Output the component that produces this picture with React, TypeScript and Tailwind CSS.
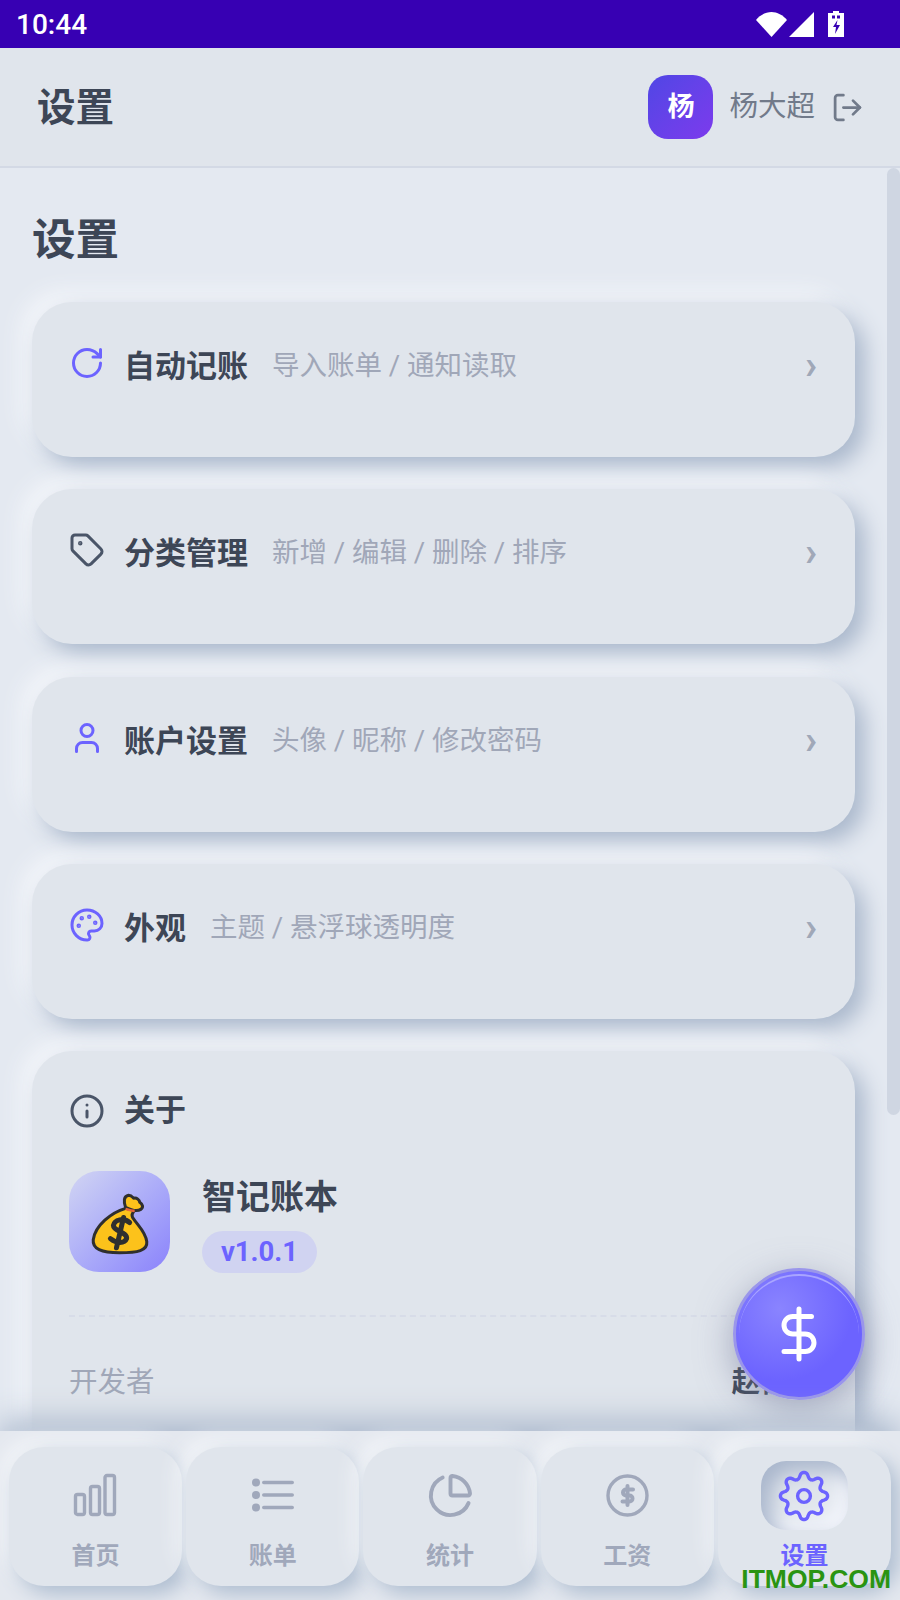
import { RotateCw, Tag, User, Palette, Info, LogOut, ChartPie, DollarSign } from 'lucide-react';
import type { ReactNode } from 'react';

const rows = [
  { icon: <RotateCw className="w-9 h-9 text-[#6c63ff]" strokeWidth={2} />, title: '自动记账', desc: '导入账单 / 通知读取' },
  { icon: <Tag className="w-9 h-9 text-[#4a5568]" strokeWidth={2} />, title: '分类管理', desc: '新增 / 编辑 / 删除 / 排序' },
  { icon: <User className="w-9 h-9 text-[#6c63ff]" strokeWidth={2} />, title: '账户设置', desc: '头像 / 昵称 / 修改密码' },
  { icon: <Palette className="w-9 h-9 text-[#6c63ff]" strokeWidth={2} />, title: '外观', desc: '主题 / 悬浮球透明度' },
];

// rounded 8-tooth outline, as a polar wave
const gearPath = Array.from({ length: 160 }, (_, i) => {
  const a = (i / 160) * Math.PI * 2;
  const wave = Math.cos(a * 8);
  const r = 20.6 + 3 * Math.sign(wave) * Math.pow(Math.abs(wave), 0.7);
  const x = 26 + r * Math.sin(a);
  const y = 26 - r * Math.cos(a);
  return `${i === 0 ? 'M' : 'L'}${x.toFixed(2)} ${y.toFixed(2)}`;
}).join(' ') + 'Z';

const GearIcon = () => (
  <svg viewBox="0 0 52 52" className="w-[52px] h-[52px]" fill="none" stroke="currentColor" strokeWidth={3.4} strokeLinejoin="round">
    <path d={gearPath} />
    <circle cx="26" cy="26" r="6.4" />
  </svg>
);

const BarsIcon = () => (
  <svg viewBox="0 0 45 45" className="w-[45px] h-[45px]" fill="none" stroke="currentColor" strokeWidth={3.4}>
    <rect x="2.5" y="21.5" width="9" height="20" rx="2" />
    <rect x="17.5" y="13.5" width="9" height="28" rx="2" />
    <rect x="32" y="2.5" width="9.5" height="39" rx="2" />
  </svg>
);

const ListIcon = () => (
  <svg viewBox="0 0 45 45" className="w-[45px] h-[45px]" fill="currentColor">
    <circle cx="6" cy="9.500" r="4" />
    <circle cx="6" cy="22" r="4" />
    <circle cx="6" cy="34.500" r="4" />
    <rect x="12" y="7.700" width="32" height="3.600" rx="1.800" />
    <rect x="12" y="20.200" width="32" height="3.600" rx="1.800" />
    <rect x="12" y="32.700" width="32" height="3.600" rx="1.800" />
  </svg>
);

const CoinIcon = () => (
  <svg viewBox="0 0 45 45" className="w-[45px] h-[45px]" fill="none" stroke="currentColor" strokeLinecap="round">
    <circle cx="22.500" cy="22.500" r="19.500" strokeWidth={3.4} />
    <path d="M28 16.500h-7a3 3 0 0 0 0 6h3.500a3 3 0 0 1 0 6h-7" strokeWidth={4} />
    <path d="M22.500 13v19" strokeWidth={4} />
  </svg>
);

const MoneyBag = () => (
  <svg viewBox="0 0 100 100" className="w-full h-full">
    <path d="M56 37C42 41 26 54 24 68C23 77 32 81 50 81C68 81 78 79 77 70C76 60 68 54 63 46C62 44 63 41 65 39Z" fill="#fcc21b" stroke="#2f2f2f" strokeWidth="3" strokeLinejoin="round" />
    <path d="M56 36C54 30 54 25 59 24C62 24 63 26 64 27C67 26 70 29 70 31C73 33 74 36 71 38C68 40 62 39 56 36Z" fill="#fcc21b" stroke="#2f2f2f" strokeWidth="3" strokeLinejoin="round" />
    <path d="M56 37.500C59 38.500 62 39.500 65 39.500" stroke="#e8683a" strokeWidth="2.600" fill="none" />
    <path d="M60 51C54 46 45 48 44 54C44 60 58 60 57 67C55 72 47 72 41 67M54 46L47 76" stroke="#2f2f2f" strokeWidth="5" fill="none" strokeLinecap="round" />
  </svg>
);

const SoftCard = ({ className, children }: { className: string; children: ReactNode }) => (
  <div className={`bg-[#e0e5ec] rounded-[40px] shadow-[10px_10px_22px_#aab8cc,-10px_-10px_22px_#f4f6fa] ${className}`}>
    {children}
  </div>
);

const NavItem = ({ icon, label, active }: { icon: ReactNode; label: string; active?: boolean }) => (
  <div className="flex-1 h-[139px] rounded-[35px] bg-[#e0e5ec] shadow-[8px_8px_20px_#aebdd0,-8px_-8px_20px_#f4f6f9] flex flex-col items-center">
    <div
      className={`mt-[14px] w-[87px] h-[69px] rounded-[25px] flex items-center justify-center ${
        active
          ? 'text-[#6c63ff] shadow-[inset_10px_10px_20px_#a9b6cc,inset_-10px_-10px_20px_#f4f6fc]'
          : 'text-[#a0a8bb]'
      }`}
    >
      {icon}
    </div>
    <span className={`mt-[8px] text-[24px] leading-[36px] font-bold ${active ? 'text-[#6c63ff]' : 'text-[#a0a8bb]'}`}>
      {label}
    </span>
  </div>
);

export default function App() {
  return (
    <div className="relative w-[900px] h-[1600px] overflow-hidden flex flex-col bg-[#e4e9f1] font-['Roboto','Noto_Sans_CJK_SC',sans-serif]">
      {/* Status bar */}
      <div className="h-[48px] shrink-0 bg-[#3700b3] flex items-center justify-between pl-[16px] pr-[56px] text-white">
        <span className="text-[28px] leading-none font-medium mt-[2px]">10:44</span>
        <div className="flex items-center">
          <svg viewBox="0 0 31 25" className="w-[31px] h-[25px]" fill="white">
            <path d="M0 8C4 3 10 0 15.500 0S27 3 31 8L15.500 25z" />
          </svg>
          <svg viewBox="0 0 25 25" className="w-[25px] h-[25px] ml-[2px]" fill="white">
            <path d="M25 0v25H0z" />
          </svg>
          <svg viewBox="0 0 16 26" className="w-[16px] h-[26px] ml-[14px]">
            <path d="M5 0h6v2h5v24H0V2h5z" fill="white" />
            <path d="M9.500 9 5 16h3l-1 7 5-9H8.500z" fill="#3700b3" />
            <path d="M4 4.500h3v3H4zM9 4.500h3v3H9z" fill="#3700b3" />
          </svg>
        </div>
      </div>

      {/* Top bar */}
      <header className="h-[120px] shrink-0 bg-[#e0e5ec] border-b-2 border-[#d3d9e5] flex items-center justify-between pl-[37px] pr-[36px]">
        <h1 className="text-[38.500px] font-bold text-[#3d4656] mt-[2px]">设置</h1>
        <div className="flex items-center">
          <div className="w-[65px] h-[64px] rounded-[20px] bg-gradient-to-br from-[#4f46e5] to-[#7c3aed] flex items-center justify-center text-white text-[27px] font-bold">
            杨
          </div>
          <span className="ml-[16px] text-[28.500px] text-[#717a8a]">杨大超</span>
          <LogOut className="ml-[16px] w-[33px] h-[33px] text-[#717a8a]" strokeWidth={2} />
        </div>
      </header>

      {/* Scroll area */}
      <main className="relative flex-1 overflow-hidden pl-[32px] pr-[45px] pt-[41px]">
        <h2 className="text-[43.500px] leading-[62px] font-bold text-[#3d4656] mt-[1px]">设置</h2>

        <div className="mt-[30px] flex flex-col gap-[32.250px]">
          {rows.map((row) => (
            <SoftCard key={row.title} className="h-[155px] flex items-start pl-[37px] pr-[36px] pt-[44px]">
              <div className="w-[36px] h-[36px] shrink-0 mt-[-1px]">{row.icon}</div>
              <span className="ml-[19px] text-[31px] leading-[44px] font-bold text-[#3d4656] mt-[-1px]">{row.title}</span>
              <span className="ml-[24px] text-[27.500px] leading-[40px] text-[#a0a7b8]">{row.desc}</span>
              <span className="ml-auto mr-[2px] text-[40px] leading-[40px] font-bold text-[#a0a8b8]">›</span>
            </SoftCard>
          ))}

          <SoftCard className="h-[420px] pl-[37px] pr-[38px] pt-[42px]">
            <div className="flex items-center h-[36px]">
              <Info className="w-9 h-9 text-[#4a5568]" strokeWidth={2} />
              <span className="ml-[19px] text-[31px] font-bold text-[#3d4656]">关于</span>
            </div>
            <div className="mt-[42px] flex items-start">
              <div className="w-[101px] h-[101px] rounded-[30px] bg-gradient-to-br from-[#d2d5f2] to-[#8b82fb]">
                <MoneyBag />
              </div>
              <div className="ml-[32px]">
                <div className="text-[34px] leading-[46px] font-bold text-[#3d4656] mt-[3px]">智记账本</div>
                <div className="mt-[11px] w-[115px] h-[42px] rounded-full bg-[#d0d3f1] flex items-center justify-center text-[27.500px] font-bold text-[#6c63ff]">
                  v1.0.1
                </div>
              </div>
            </div>
            <div className="mt-[42px] border-t-2 border-dashed border-[#d7dce8]" />
            <div className="mt-[45px] flex items-center justify-between">
              <span className="text-[28.500px] text-[#a0a7b8]">开发者</span>
              <span className="text-[28.500px] font-bold text-[#3d4656]">赵德超</span>
            </div>
          </SoftCard>
        </div>

        {/* Scrollbar */}
        <div className="absolute right-0 top-0 w-[13px] h-[947px] rounded-full bg-[#cfd6e2]" />

        {/* Floating button */}
        <div className="absolute left-[733px] top-[1100px] w-[132px] h-[132px] rounded-full bg-[radial-gradient(circle_at_35%_30%,#8a84ff,#6c63ff_60%)] border-[3px] border-[#9a96ea] shadow-[0_10px_36px_rgba(110,115,150,0.55)] flex items-center justify-center">
          <div className="absolute inset-[3px] rounded-full border-t-2 border-[#a9a5ff]" />
          <DollarSign className="w-[60px] h-[60px] text-white" strokeWidth={2} />
        </div>
      </main>

      {/* Bottom nav */}
      <nav className="relative h-[169px] shrink-0 bg-[#e4e8ef] shadow-[0_-10px_30px_#aab8cc] flex items-start gap-[4px] px-[9px] pt-[16px]">
        <NavItem icon={<BarsIcon />} label="首页" />
        <NavItem icon={<ListIcon />} label="账单" />
        <NavItem icon={<ChartPie className="w-[47px] h-[47px]" strokeWidth={2} />} label="统计" />
        <NavItem icon={<CoinIcon />} label="工资" />
        <NavItem icon={<GearIcon />} label="设置" active />
      </nav>

      {/* Watermark */}
      <span className="absolute right-[9px] bottom-[1px] text-[26.500px] leading-[40px] font-bold text-[#2a9412] font-['Liberation_Sans',sans-serif]">
        ITMOP.COM
      </span>
    </div>
  );
}
